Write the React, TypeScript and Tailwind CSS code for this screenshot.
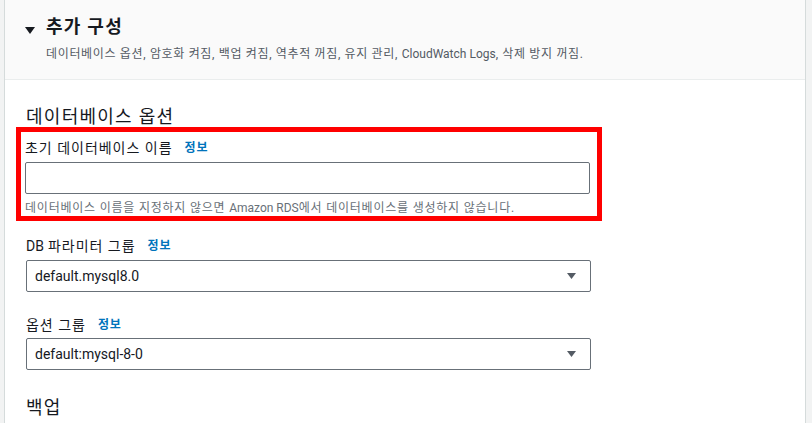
import React from 'react';

const font = { fontFamily: 'Roboto, "Noto Sans CJK KR", sans-serif' };

const InfoLink: React.FC = () => (
  <a className="ml-[12px] text-[12px] font-bold tracking-[0.07em] text-[#0073bb]">정보</a>
);

const SelectBox: React.FC<{ value: string }> = ({ value }) => (
  <div className="flex h-[32px] w-[565px] items-center justify-between rounded-[2px] border border-[#687078] bg-white pl-[8px] pr-[14px]">
    <span className="text-[14px] text-[#16191f]">{value}</span>
    <svg width="9" height="6" viewBox="0 0 9 6">
      <path d="M0 0 L9 0 L4.5 6 Z" fill="#545b64" />
    </svg>
  </div>
);

const App: React.FC = () => {
  return (
    <div className="min-h-screen bg-[#f2f3f3] px-[4px]" style={font}>
      <div className="h-[423px] w-[802px] overflow-hidden border-x border-[#d5dbdb] bg-white">
        <div className="flex h-[80px] items-start gap-[11px] border-b border-[#eaeded] bg-[#fafafa] pl-[20px] pt-[15px]">
          <svg width="10" height="24" viewBox="0 0 10 24" className="shrink-0">
            <path d="M0 12 L10 12 L5 19 Z" fill="#16191f" />
          </svg>
          <div>
            <h2 className="text-[18px] font-bold leading-[24px] tracking-[0.07em] text-[#16191f]">추가 구성</h2>
            <p className="mt-[7px] text-[12px] leading-[16px] tracking-[0.055em] text-[#545b64]">
              데이터베이스 옵션, 암호화 켜짐, 백업 켜짐, 역추적 꺼짐, 유지 관리,{' '}
              <span className="tracking-normal">CloudWatch Logs</span>, 삭제 방지 꺼짐.
            </p>
          </div>
        </div>

        <div className="pl-[21px] pt-[25px]">
          <h3 className="text-[18px] leading-[24px] tracking-[0.07em] text-[#16191f]">데이터베이스 옵션</h3>

          <div className="ml-[-10px] mt-[-2px] w-[586px] border-[5px] border-[#ff0000] pl-[4px] pr-[6px] pt-[6px]">
            <div className="flex items-center text-[14px] leading-[20px] tracking-[0.07em] text-[#16191f]">
              초기 데이터베이스 이름
              <InfoLink />
            </div>
            <div className="mt-[4px] h-[32px] w-[565px] rounded-[2px] border border-[#687078] bg-white" />
            <p className="mt-[6px] text-[12px] leading-[16px] tracking-[0.065em] text-[#687078]">
              데이터베이스 이름을 지정하지 않으면 <span className="tracking-normal">Amazon RDS</span>에서 데이터베이스를 생성하지 않습니다.
            </p>
          </div>

          <div className="mt-[15px] flex items-center text-[14px] leading-[20px] text-[#16191f]">
            DB <span className="ml-[4px] tracking-[0.07em]">파라미터 그룹</span>
            <InfoLink />
          </div>
          <div className="mt-[4px]">
            <SelectBox value="default.mysql8.0" />
          </div>

          <div className="mt-[23px] flex items-center text-[14px] leading-[20px] tracking-[0.07em] text-[#16191f]">
            옵션 그룹
            <InfoLink />
          </div>
          <div className="mt-[3px]">
            <SelectBox value="default:mysql-8-0" />
          </div>

          <h3 className="mt-[26px] text-[18px] leading-[24px] tracking-[0.07em] text-[#16191f]">백업</h3>
        </div>
      </div>
    </div>
  );
};

export default App;
